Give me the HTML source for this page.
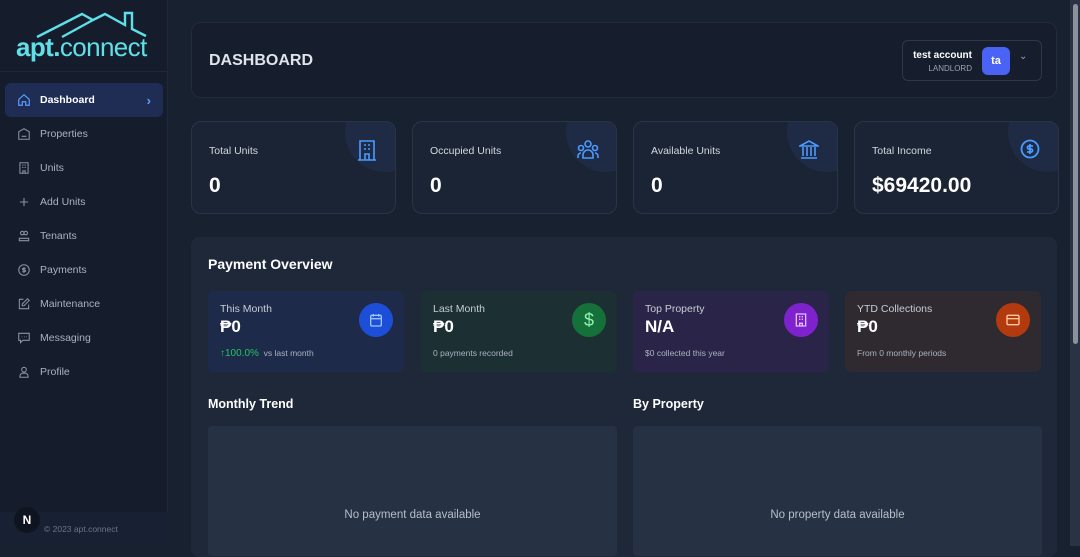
<!DOCTYPE html>
<html><head><meta charset="utf-8"><style>
*{box-sizing:border-box;margin:0;padding:0}
body{width:1080px;height:546px;overflow:hidden;background:#182130;font-family:"Liberation Sans",sans-serif;color:#fff;position:relative}
.side{position:absolute;left:0;top:0;width:168px;height:546px;background:#151d2c;border-right:1px solid #1e283a}
.nav{position:absolute;left:5px;top:83px;width:158px}
.it{height:34px;display:flex;align-items:center;padding-left:12px;font-size:10.5px;color:#aab2bf;gap:9px}
.it.act{background:#1f2d55;border-radius:6px;color:#fff;font-weight:bold}
.it svg{width:14px;height:14px;flex:none}
.main{position:absolute;left:168px;top:0;width:902px;height:546px}
.card{position:absolute;border:1px solid #2a3446;border-radius:10px;background:#1b2434;overflow:hidden}
.lbl{font-size:10.5px;color:#d3d8e0}
.big{font-size:21px;font-weight:bold}
.circ{position:absolute;right:-30px;top:-30px;width:80px;height:80px;border-radius:50%;background:#1f2b45}
.sub{position:absolute;top:291px;width:196px;height:81px;border-radius:6px}
.sub .t{position:absolute;left:12px;top:12px;font-size:10.5px;color:#c7ccd6}
.sub .v{position:absolute;left:12px;top:26px;font-size:17px;font-weight:bold}
.sub .s{position:absolute;left:12px;top:57px;font-size:8.5px;color:#aab2bf}
.sub .ic{position:absolute;right:11px;top:12px;width:34px;height:34px;border-radius:50%;display:flex;align-items:center;justify-content:center}
.chart{position:absolute;top:426px;width:409px;height:130px;background:#263143;border-radius:4px;font-size:11.5px;color:#b7bec9;text-align:center;padding-top:83px}
</style></head><body>
<div class="side">
<svg style="position:absolute;left:0;top:0" width="168" height="40" viewBox="0 0 168 40"><path d="M37 37 L82 14 L93 20 L105 14 L125 25 V13 H132 V29 L146 36" fill="none" stroke="#5fe0e8" stroke-width="2.4"/><path d="M62 37 L93 20" stroke="#5fe0e8" stroke-width="2.4"/></svg>
<div style="position:absolute;left:16px;top:32px;font-size:26px;color:#5fe0e8;letter-spacing:-0.6px;line-height:30px"><b>apt.</b>connect</div>
<div style="position:absolute;left:0;top:71px;width:168px;border-top:1px solid #1e283a"></div>
<div class="nav">
<div class="it act"><svg viewBox="0 0 24 24" fill="none" stroke="#5aa0ff" stroke-width="2"><path d="M3 11l9-8 9 8v10h-6v-6H9v6H3z"/></svg><span style="flex:1">Dashboard</span><span style="color:#5aa0ff;margin-right:12px;font-size:13px">›</span></div>
<div class="it"><svg viewBox="0 0 24 24" fill="none" stroke="#8a93a3" stroke-width="1.8"><path d="M3 21V8l9-5 9 5v13zM8 16h8"/></svg>Properties</div>
<div class="it"><svg viewBox="0 0 24 24" fill="none" stroke="#8a93a3" stroke-width="1.8"><path d="M5 21V3h14v18zM9 7h2M13 7h2M9 11h2M13 11h2M10 21v-4h4v4"/></svg>Units</div>
<div class="it"><svg viewBox="0 0 24 24" fill="none" stroke="#8a93a3" stroke-width="1.8"><path d="M12 5v14M5 12h14"/></svg>Add Units</div>
<div class="it"><svg viewBox="0 0 24 24" fill="none" stroke="#8a93a3" stroke-width="1.8"><circle cx="9" cy="7" r="3"/><circle cx="15" cy="7" r="3"/><path d="M4 20v-4h16v4z"/></svg>Tenants</div>
<div class="it"><svg viewBox="0 0 24 24" fill="none" stroke="#8a93a3" stroke-width="1.8"><circle cx="12" cy="12" r="9"/><path d="M15 9h-4a1.5 1.5 0 000 3h2a1.5 1.5 0 010 3H9M12 7v10"/></svg>Payments</div>
<div class="it"><svg viewBox="0 0 24 24" fill="none" stroke="#8a93a3" stroke-width="1.8"><path d="M11 4H4v16h16v-7M18 3l3 3-9 9H9v-3z"/></svg>Maintenance</div>
<div class="it"><svg viewBox="0 0 24 24" fill="none" stroke="#8a93a3" stroke-width="1.8"><path d="M3 4h18v12H10l-4 4v-4H3zM8 10h1M12 10h1M16 10h1"/></svg>Messaging</div>
<div class="it"><svg viewBox="0 0 24 24" fill="none" stroke="#8a93a3" stroke-width="1.8"><circle cx="12" cy="8" r="4"/><path d="M5 21v-2a5 5 0 015-5h4a5 5 0 015 5v2z"/></svg>Profile</div>
</div>
<div style="position:absolute;left:0;top:512px;width:168px;height:34px;background:#182133"></div>
<div style="position:absolute;left:14px;top:507px;width:26px;height:26px;border-radius:50%;background:#0f1520;font-size:12px;font-weight:bold;display:flex;align-items:center;justify-content:center">N</div>
<div style="position:absolute;left:44px;top:524px;font-size:8.5px;color:#6b7587">© 2023 apt.connect</div>
</div>
<div class="main">
<div class="card" style="left:23px;top:22px;width:866px;height:76px;background:#161e2d;border-color:#222c3d">
<div style="position:absolute;left:17px;top:29px;font-size:16px;font-weight:bold;color:#dfe3ea">DASHBOARD</div>
<div style="position:absolute;left:710px;top:17px;width:140px;height:41px;border:1px solid #2e3849;border-radius:6px">
<div style="position:absolute;right:69px;top:9px;font-size:10px;font-weight:bold;text-align:right;white-space:nowrap">test account</div>
<div style="position:absolute;right:69px;top:23px;font-size:8px;color:#9aa3b0">LANDLORD</div>
<div style="position:absolute;left:79px;top:6px;width:28px;height:28px;border-radius:6px;background:#4a63f5;font-size:11px;font-weight:bold;display:flex;align-items:center;justify-content:center">ta</div>
<div style="position:absolute;left:116px;top:10px;font-size:10px;color:#9aa3b0">⌄</div>
</div>
</div>
<div class="card" style="left:23px;top:121px;width:205px;height:93px"><div class="circ"></div><div class="lbl" style="position:absolute;left:17px;top:23px">Total Units</div><div class="big" style="position:absolute;left:17px;top:52px">0</div>
<svg style="position:absolute;left:165px;top:17px" width="20" height="22" viewBox="0 0 20 22" fill="none" stroke="#4a9bff" stroke-width="1.6"><path d="M3 21V2h14v19M1 21h18M7 6h2M11 6h2M7 10h2M11 10h2M8 21v-6h4v6"/></svg></div>
<div class="card" style="left:244px;top:121px;width:205px;height:93px"><div class="circ"></div><div class="lbl" style="position:absolute;left:17px;top:23px">Occupied Units</div><div class="big" style="position:absolute;left:17px;top:52px">0</div>
<svg style="position:absolute;left:164px;top:18px" width="22" height="20" viewBox="0 0 22 20" fill="none" stroke="#4a9bff" stroke-width="1.6"><circle cx="11" cy="4" r="3"/><circle cx="4" cy="8" r="2.5"/><circle cx="18" cy="8" r="2.5"/><path d="M6 18v-3a5 5 0 0110 0v3zM1 18v-2a3 3 0 013-3M21 18v-2a3 3 0 00-3-3"/></svg></div>
<div class="card" style="left:465px;top:121px;width:205px;height:93px"><div class="circ"></div><div class="lbl" style="position:absolute;left:17px;top:23px">Available Units</div><div class="big" style="position:absolute;left:17px;top:52px">0</div>
<svg style="position:absolute;left:165px;top:17px" width="20" height="20" viewBox="0 0 20 20" fill="none" stroke="#4a9bff" stroke-width="1.6"><path d="M1 7L10 2l9 5zM2 19h16M4 8v9M8 8v9M12 8v9M16 8v9"/></svg></div>
<div class="card" style="left:686px;top:121px;width:205px;height:93px"><div class="circ"></div><div class="lbl" style="position:absolute;left:17px;top:23px">Total Income</div><div class="big" style="position:absolute;left:17px;top:52px">$69420.00</div>
<svg style="position:absolute;left:165px;top:17px" width="20" height="20" viewBox="0 0 20 20" fill="none" stroke="#4a9bff" stroke-width="1.8"><circle cx="10" cy="10" r="8.5"/><path d="M13 7H9a1.5 1.5 0 000 3h2a1.5 1.5 0 010 3H7M10 5v10"/></svg></div>
<div style="position:absolute;left:23px;top:237px;width:866px;height:320px;background:#1e2839;border-radius:8px"></div>
<div style="position:absolute;left:40px;top:256px;font-size:14px;font-weight:bold">Payment Overview</div>
</div>
<div class="sub" style="left:208px;background:#1e2a4a"><div class="t">This Month</div><div class="v">₱0</div><div class="s"><span style="color:#22c55e;font-size:10px">↑100.0%</span>&nbsp; vs last month</div><div class="ic" style="background:#1d4ed8"><svg width="16" height="16" viewBox="0 0 24 24" fill="none" stroke="#9cc4ff" stroke-width="2"><rect x="4" y="5" width="16" height="16" rx="2"/><path d="M4 10h16M8 3v4M16 3v4"/></svg></div></div>
<div class="sub" style="left:421px;background:#1c2f33"><div class="t">Last Month</div><div class="v">₱0</div><div class="s">0 payments recorded</div><div class="ic" style="background:#15703a"><span style="color:#8ff0b0;font-size:18px">$</span></div></div>
<div class="sub" style="left:633px;background:#2a2548"><div class="t">Top Property</div><div class="v">N/A</div><div class="s">$0 collected this year</div><div class="ic" style="background:#7e22ce"><svg width="16" height="16" viewBox="0 0 24 24" fill="none" stroke="#e0c0ff" stroke-width="2"><path d="M5 21V3h14v18zM9 7h2M13 7h2M9 11h2M13 11h2M10 21v-4h4v4"/></svg></div></div>
<div class="sub" style="left:845px;background:#2e2a30"><div class="t">YTD Collections</div><div class="v">₱0</div><div class="s">From 0 monthly periods</div><div class="ic" style="background:#b33a0e"><svg width="16" height="16" viewBox="0 0 24 24" fill="none" stroke="#ffc9a0" stroke-width="2"><rect x="3" y="5" width="18" height="14" rx="2"/><path d="M3 10h18"/></svg></div></div>
<div style="position:absolute;left:208px;top:397px;font-size:12.5px;font-weight:bold">Monthly Trend</div>
<div style="position:absolute;left:633px;top:397px;font-size:12.5px;font-weight:bold">By Property</div>
<div class="chart" style="left:208px">No payment data available</div>
<div class="chart" style="left:633px">No property data available</div>
<div style="position:absolute;left:1070px;top:0;width:10px;height:546px;background:#2a3344"></div>
<div style="position:absolute;left:1073px;top:4px;width:5px;height:340px;background:#8c929c;border-radius:3px"></div>
</body></html>
